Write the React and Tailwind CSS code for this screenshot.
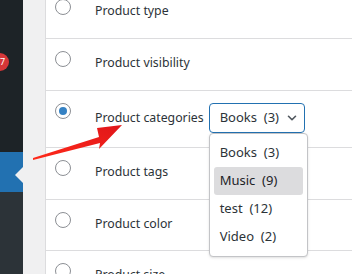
import React from 'react';
import { ChevronDown } from 'lucide-react';

const font = { fontFamily: '"Noto Sans", "Open Sans", Arial, sans-serif' };

function Radio({ checked }) {
    return (
        <span className="mt-0 flex h-4 w-4 shrink-0 items-center justify-center rounded-full border border-[#8c8f94] bg-white">
            {checked && <span className="h-2 w-2 rounded-full bg-[#3582c4]" />}
        </span>
    );
}

function Row({ label, height, checked, children, className = '' }) {
    return (
        <div className={`flex items-start border-b border-[#dcdcde] pl-[9px] pt-3 ${height} ${className}`}>
            <Radio checked={checked} />
            <div className="ml-6 flex items-center gap-[5px]">
                <span className="text-[12.3px] leading-6 text-[#2c3338]">{label}</span>
                {children}
            </div>
        </div>
    );
}

const options = [
    { name: 'Books', count: 3 },
    { name: 'Music', count: 9 },
    { name: 'test', count: 12 },
    { name: 'Video', count: 2 },
];

function CategorySelect() {
    return (
        <div className="relative">
            <div className="flex h-[30px] w-[96px] items-center rounded-[4px] border border-[#2271b1] pl-[10px] text-[13px] text-[#2c3338]">
                <span className="whitespace-pre">Books  (3)</span>
                <ChevronDown size={14} strokeWidth={2.8} className="ml-[6px] text-[#50575e]" />
            </div>
            <div className="absolute left-0 top-full z-10 w-[99px] rounded-[4px] border border-[#c3c4c7] bg-white px-[4px] py-[5px] shadow-sm">
                {options.map((o) => (
                    <div
                        key={o.name}
                        className={`flex h-7 items-center rounded-[3px] px-[6px] text-[13px] whitespace-pre ${o.name === 'Music' ? 'bg-[#dcdcde] text-[#1d2327]' : 'text-[#2c3338]'}`}
                    >
                        {o.name}  ({o.count})
                    </div>
                ))}
            </div>
        </div>
    );
}

export default function App() {
    return (
        <div className="relative flex h-[274px] w-[352px] overflow-hidden bg-[#f0f0f1]" style={font}>
            {/* admin sidebar */}
            <div className="flex w-[23px] shrink-0 flex-col">
                <div className="relative h-[152px] bg-[#1d2327]">
                    <span className="absolute left-[-9px] top-[53px] flex h-[18px] w-[18px] items-center justify-center rounded-full bg-[#d63638] text-[9px] text-white">
                        17
                    </span>
                </div>
                <div className="relative h-[40px] bg-[#2271b1]">
                    <span className="absolute right-0 top-[15px] h-0 w-0 border-y-[8px] border-r-[8px] border-y-transparent border-r-[#f0f0f1]" />
                </div>
                <div className="flex-1 bg-[#2c3338]" />
            </div>

            <div className="w-[22px] shrink-0" />

            {/* settings panel */}
            <div className="mt-[-13px] flex-1 border-l border-[#dcdcde] bg-white">
                <Row label="Product type" height="h-[52px]" />
                <Row label="Product visibility" height="h-[52px]" />
                <Row label="Product categories" height="h-[57px]" checked>
                    <CategorySelect />
                </Row>
                <Row label="Product tags" height="h-[52px]" />
                <Row label="Product color" height="h-[51px]" />
                <Row label="Product size" height="h-[51px]" />
            </div>

            {/* annotation arrow */}
            <svg className="pointer-events-none absolute inset-0" width="352" height="274" viewBox="0 0 352 274">
                <defs>
                    <linearGradient id="arrow" x1="0" y1="1" x2="1" y2="0">
                        <stop offset="0" stopColor="#ff2a1a" />
                        <stop offset="1" stopColor="#e0161a" />
                    </linearGradient>
                </defs>
                <polygon
                    points="33,158 99,137 97,128 122,125 99,149 100,143 33,160"
                    fill="url(#arrow)"
                />
            </svg>
        </div>
    );
}
